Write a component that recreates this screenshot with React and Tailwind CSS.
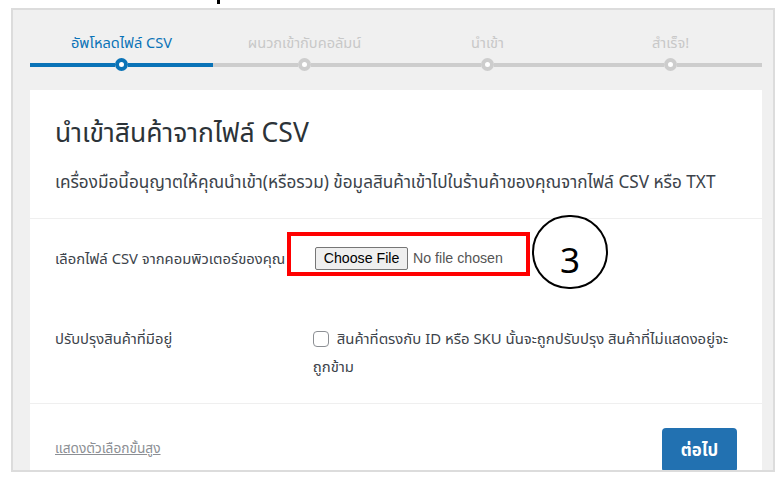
import React from "react";

const steps = [
  { label: "อัพโหลดไฟล์ CSV", active: true },
  { label: "ผนวกเข้ากับคอลัมน์", active: false },
  { label: "นำเข้า", active: false },
  { label: "สำเร็จ!", active: false },
];

function Step({ label, active }) {
  const line = active ? "bg-[#0a73b7]" : "bg-[#cdcdcd]";
  return (
    <div className="flex-1 flex flex-col items-center">
      <div
        className={`text-[14.6px] leading-[20px] ${active ? "text-[#0a73b7]" : "text-[#c8c8c8]"}`}
      >
        {label}
      </div>
      <div className="w-full flex items-center mt-[6px]">
        <div className={`flex-1 h-[4px] ${line}`} />
        <div
          className={`w-[13px] h-[13px] rounded-full border-[4px] bg-white ${active ? "border-[#0a73b7]" : "border-[#cdcdcd]"}`}
        />
        <div className={`flex-1 h-[4px] ${line}`} />
      </div>
    </div>
  );
}

export default function App() {
  return (
    <div
      className="relative w-[783px] h-[478px] bg-white overflow-hidden"
      style={{ fontFamily: '"Noto Sans", "Noto Sans Thai", Tahoma, sans-serif' }}
    >
      <div className="h-[8px]">
        <div className="ml-[217px] w-[3px] h-[4px] bg-black" />
      </div>
      <div className="ml-[11px] w-[764px] h-[464px] border-2 border-[#dcdcdc] bg-[#f0f0f0] overflow-hidden">
        <div className="ml-[17px] w-[732px] flex pt-[22px]">
          {steps.map((s) => (
            <Step key={s.label} {...s} />
          ))}
        </div>
        <div className="ml-[17px] mt-[19px] w-[732px] bg-white text-[#3c434a]">
          <div className="px-[25px] pt-[27px] pb-[25px] border-b border-[#efefef]">
            <h1 className="text-[26.5px] leading-[30px] text-[#2c3338]">
              นำเข้าสินค้าจากไฟล์ CSV
            </h1>
            <p className="mt-[24px] text-[17.2px] leading-[22px] whitespace-nowrap">
              เครื่องมือนี้อนุญาตให้คุณนำเข้า(หรือรวม) ข้อมูลสินค้าเข้าไปในร้านค้าของคุณจากไฟล์ CSV หรือ TXT
            </p>
          </div>
          <div className="px-[25px] pt-[28px] pb-[23px] border-b border-[#efefef] text-[14.8px]">
            <div className="flex items-start">
              <div className="w-[260px] leading-[22px] whitespace-nowrap overflow-hidden">
                เลือกไฟล์ CSV จากคอมพิวเตอร์ของคุณ
              </div>
              <div className="flex items-center" style={{ fontFamily: '"Liberation Sans", Arial, sans-serif' }}>
                <span className="h-[23px] w-[93px] flex items-center justify-center bg-[#efefef] border border-[#767676] rounded-[2px] text-[14.2px] text-black">
                  Choose File
                </span>
                <span className="ml-[5px] text-[14.2px] text-[#555]">No file chosen</span>
              </div>
            </div>
            <div className="flex items-start mt-[54px]">
              <div className="w-[260px] leading-[28px]">ปรับปรุงสินค้าที่มีอยู่</div>
              <div className="w-[428px] leading-[28px] text-[14.9px]">
                <span className="inline-block align-middle w-[16px] h-[16px] border border-[#8c8f94] rounded-[4px] mr-[8px] -mt-[3px]" />
                สินค้าที่ตรงกับ ID หรือ SKU นั้นจะถูกปรับปรุง สินค้าที่ไม่แสดงอยู่จะถูกข้าม
              </div>
            </div>
          </div>
          <div className="px-[25px] pt-[24px] pb-[20px] flex items-center justify-between">
            <a className="text-[13.7px] text-[#8c8f94] underline mt-[-4px]">แสดงตัวเลือกขั้นสูง</a>
            <button className="w-[75px] h-[44px] rounded-[4px] bg-[#2271b1] text-white text-[16.8px] font-bold">
              ต่อไป
            </button>
          </div>
        </div>
      </div>
      <div className="absolute left-[287px] top-[232px] w-[243px] h-[44px] border-[4px] border-[#ff0000]" />
      <div
        className="absolute left-[532px] top-[215px] w-[76px] h-[74px] rounded-full border-2 border-black flex items-center justify-center text-[35px] leading-none text-black pt-[14px]"
        style={{ fontFamily: '"Noto Sans", sans-serif' }}
      >
        3
      </div>
    </div>
  );
}
